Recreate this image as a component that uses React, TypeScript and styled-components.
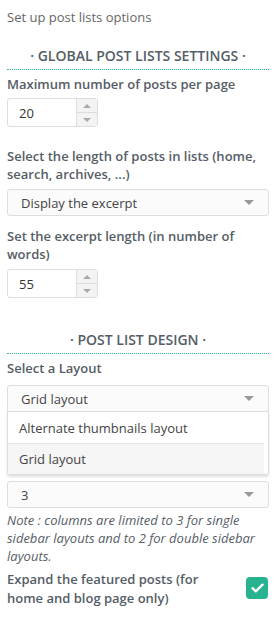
import React from "react";
import styled, { createGlobalStyle } from "styled-components";

const GlobalStyle = createGlobalStyle`
  html, body {
    margin: 0;
    padding: 0;
    background: #fff;
  }
  body {
    font-family: "Open Sans", "Noto Sans", sans-serif;
    color: #555d66;
  }
  * { box-sizing: border-box; }
`;

const Panel = styled.div`
  width: 279px;
  padding: 8px 10px 10px 7px;
  display: flex;
  flex-direction: column;
`;

const Intro = styled.div`
  font-size: 13px;
  line-height: 18px;
  color: #666;
`;

const SectionTitle = styled.div<{ $top: number }>`
  margin-top: ${(p) => p.$top}px;
  padding-bottom: 3px;
  border-bottom: 1px dotted #1fb89a;
  text-align: center;
  font-size: 14px;
  line-height: 20px;
  font-weight: 600;
  text-transform: uppercase;
  color: #555d66;
`;

const Label = styled.div<{ $top: number }>`
  margin-top: ${(p) => p.$top}px;
  font-size: 13px;
  line-height: 18px;
  font-weight: 600;
  color: #555d66;
`;

const NumberBox = styled.div<{ $top: number }>`
  margin-top: ${(p) => p.$top}px;
  width: 91px;
  height: 29px;
  display: flex;
  border: 1px solid #ddd;
  border-radius: 3px;
  background: #fff;
`;

const NumberValue = styled.div`
  flex: 1;
  display: flex;
  align-items: center;
  padding-left: 11px;
  font-size: 13px;
  color: #333;
`;

const Spinner = styled.div`
  width: 21px;
  display: flex;
  flex-direction: column;
  border-left: 1px solid #ddd;
  background: #f3f3f3;
`;

const SpinButton = styled.div<{ $up?: boolean }>`
  flex: 1;
  display: flex;
  align-items: center;
  justify-content: center;
  border-bottom: ${(p) => (p.$up ? "1px solid #ddd" : "none")};

  &::after {
    content: "";
    border-left: 4px solid transparent;
    border-right: 4px solid transparent;
    ${(p) =>
      p.$up
        ? "border-bottom: 4px solid #aaa;"
        : "border-top: 4px solid #aaa;"}
  }
`;

const SelectWrap = styled.div<{ $top: number }>`
  position: relative;
  margin-top: ${(p) => p.$top}px;
`;

const SelectBox = styled.div<{ $open?: boolean }>`
  height: 27px;
  display: flex;
  align-items: center;
  justify-content: space-between;
  padding: 0 14px 0 13px;
  border: 1px solid #ddd;
  border-radius: ${(p) => (p.$open ? "3px 3px 0 0" : "3px")};
  background: #fbfbfb;
  font-size: 13px;
  color: #444;
`;

const Caret = styled.span`
  width: 0;
  height: 0;
  border-left: 5px solid transparent;
  border-right: 5px solid transparent;
  border-top: 5px solid #999;
`;

const Dropdown = styled.div`
  position: absolute;
  left: 0;
  right: 0;
  top: 26px;
  z-index: 2;
  background: #fff;
  border: 1px solid #ddd;
  border-radius: 0 0 3px 3px;
  box-shadow: 0 2px 3px rgba(0, 0, 0, 0.12);
  padding-right: 4px;
`;

const Option = styled.div<{ $active?: boolean }>`
  height: 31px;
  display: flex;
  align-items: center;
  padding-left: 11px;
  font-size: 13px;
  color: #444;
  background: ${(p) => (p.$active ? "#f5f5f5" : "#fff")};
  & + & {
    border-top: 1px solid #e6e6e6;
  }
`;

const Note = styled.div`
  margin-top: 3px;
  font-size: 13px;
  line-height: 18px;
  font-style: italic;
  color: #555d66;
`;

const CheckRow = styled.div`
  margin-top: 5px;
  display: flex;
  align-items: center;
  justify-content: space-between;
  gap: 12px;
  padding-right: 1px;
`;

const CheckLabel = styled.div`
  font-size: 13px;
  line-height: 19px;
  font-weight: 600;
  color: #555d66;
  max-width: 210px;
`;

const CheckBox = styled.div`
  width: 22px;
  height: 22px;
  flex: none;
  margin-top: -3px;
  border-radius: 4px;
  background: #27b38f;
  display: flex;
  align-items: center;
  justify-content: center;
`;

function NumberField({ value, top }: { value: string; top: number }) {
  return (
    <NumberBox $top={top}>
      <NumberValue>{value}</NumberValue>
      <Spinner>
        <SpinButton $up />
        <SpinButton />
      </Spinner>
    </NumberBox>
  );
}

export default function App() {
  return (
    <>
      <GlobalStyle />
      <Panel>
        <Intro>Set up post lists options</Intro>

        <SectionTitle $top={20}>· Global post lists settings ·</SectionTitle>
        <Label $top={5}>Maximum number of posts per page</Label>
        <NumberField value="20" top={5} />

        <Label $top={20}>Select the length of posts in lists (home, search, archives, ...)</Label>
        <SelectWrap $top={6}>
          <SelectBox>
            Display the excerpt
            <Caret />
          </SelectBox>
        </SelectWrap>

        <Label $top={11}>Set the excerpt length (in number of words)</Label>
        <NumberField value="55" top={6} />

        <SectionTitle $top={32}>· Post list design ·</SectionTitle>
        <Label $top={5}>Select a Layout</Label>
        <SelectWrap $top={8}>
          <SelectBox $open>
            Grid layout
            <Caret />
          </SelectBox>
          <Dropdown>
            <Option>Alternate thumbnails layout</Option>
            <Option $active>Grid layout</Option>
          </Dropdown>
        </SelectWrap>

        <Label $top={44}>Number of columns per row</Label>
        <SelectWrap $top={7}>
          <SelectBox>
            3
            <Caret />
          </SelectBox>
        </SelectWrap>
        <Note>
          Note : columns are limited to 3 for single sidebar layouts and to 2 for double sidebar layouts.
        </Note>

        <CheckRow>
          <CheckLabel>Expand the featured posts (for home and blog page only)</CheckLabel>
          <CheckBox>
            <svg width="13" height="10" viewBox="0 0 13 10" fill="none">
              <path d="M1.5 5.2 L4.8 8.3 L11.5 1.7" stroke="#fff" strokeWidth="2.4" strokeLinecap="round" strokeLinejoin="round" />
            </svg>
          </CheckBox>
        </CheckRow>
      </Panel>
    </>
  );
}
